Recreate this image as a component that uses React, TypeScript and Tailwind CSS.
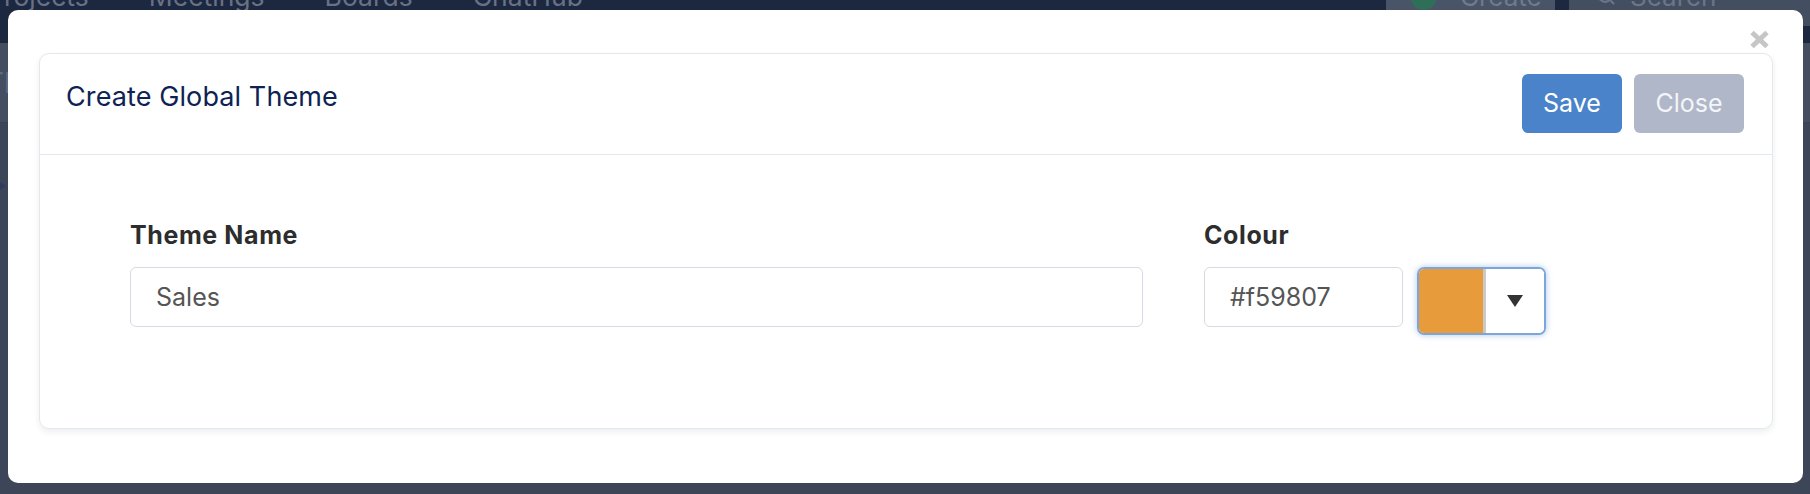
import { Search } from "lucide-react";

export default function App() {
  return (
    <div className="relative w-[1810px] h-[494px] overflow-hidden bg-[#3c4658] font-['Inter',sans-serif]">
      <div className="h-[43px] bg-[#1c2840] flex justify-between">
        <div className="flex gap-[60px] -ml-[13px] -mt-[20px] h-[32px] text-[26.5px] leading-[32px] text-[#687186]">
          <span>Projects</span>
          <span>Meetings</span>
          <span>Boards</span>
          <span>ChatHub</span>
        </div>
        <div className="flex items-start gap-[14px] -mt-[34px]">
          <div className="w-[169px] h-[60px] bg-[#4a5468] flex items-center gap-[23px] pl-[24px] text-[26px] text-[#707a8d]">
            <span className="w-[27px] h-[27px] rounded-full bg-[#2f6e57]" />
            <span>Create</span>
          </div>
          <div className="w-[241px] h-[60px] bg-[#444e61] flex items-center gap-[14px] pl-[27px] text-[26px] text-[#6c7589]">
            <Search size={20} strokeWidth={2.5} className="text-[#6c7589]" />
            <span>Search</span>
          </div>
        </div>
      </div>
      <div className="h-[80px] bg-[#454e60] border-b border-[#3a4354] text-[28px] text-[#5b6b86] leading-[80px] -ml-[14px]">
        <span>Th</span>
      </div>
      <div className="mt-[55px] -ml-[6px] w-0 h-0 border-y-[8px] border-y-transparent border-l-[12px] border-l-[#2f3e5c]" />

      {/* modal */}
      <div className="absolute left-[8px] top-[10px] w-[1795px] h-[473px] bg-white rounded-[10px] pt-[43px] pl-[31px]">
        <button className="absolute right-[33px] top-[20px] w-[21px] h-[19px]">
          <svg width="21" height="19" viewBox="0 0 21 19">
            <path d="M3 2.5 L18 16.5 M18 2.5 L3 16.5" stroke="#c6c6c6" strokeWidth="5" strokeLinecap="butt" />
          </svg>
        </button>

        <div className="w-[1734px] h-[376px] border border-[#e4e7ec] rounded-[10px] shadow-[0_3px_6px_rgba(30,40,60,0.08)]">
          <div className="flex justify-between items-start border-b border-[#e4e7ec] pl-[26px] pr-[28px] pt-[20px] pb-[21px]">
            <h2 className="mt-[7px] text-[27px] leading-[32px] tracking-[0.1px] text-[#0e2353]">Create Global Theme</h2>
            <div className="flex gap-[12px]">
              <button className="w-[100px] h-[59px] rounded-[6px] bg-[#4a83c9] text-white text-[25px]">Save</button>
              <button className="w-[110px] h-[59px] rounded-[6px] bg-[#b0b7c9] text-[#f4f5f8] text-[25px]">Close</button>
            </div>
          </div>

          <div className="flex gap-[61px] pl-[90px] pt-[66px]">
            <div className="w-[1013px]">
              <label className="block mb-[17px] text-[25px] leading-[29px] tracking-[0.6px] font-bold text-[#2d2d2d]">Theme Name</label>
              <input
                readOnly
                defaultValue="Sales"
                className="w-full h-[60px] border border-[#d5dbe3] rounded-[6px] px-[25px] text-[25px] text-[#555] outline-none"
              />
            </div>
            <div>
              <label className="block mb-[17px] text-[25px] leading-[29px] tracking-[0.6px] font-bold text-[#2d2d2d]">Colour</label>
              <div className="flex items-start gap-[14px]">
                <input
                  readOnly
                  defaultValue="#f59807"
                  className="w-[199px] h-[60px] border border-[#d5dbe3] rounded-[6px] px-[25px] text-[25px] text-[#555] outline-none"
                />
                <div className="w-[129px] h-[68px] rounded-[7px] border-2 border-[#7ca5da] shadow-[0_0_6px_rgba(74,131,201,0.45)] flex overflow-hidden">
                  <div className="w-[67px] bg-[#e89b3a] border-r-[3px] border-[#c9c9c9]" />
                  <div className="flex-1 flex items-center justify-center bg-white">
                    <svg width="16" height="12" viewBox="0 0 16 12">
                      <polygon points="0,0 16,0 8,12" fill="#333" />
                    </svg>
                  </div>
                </div>
              </div>
            </div>
          </div>
        </div>
      </div>
    </div>
  );
}
